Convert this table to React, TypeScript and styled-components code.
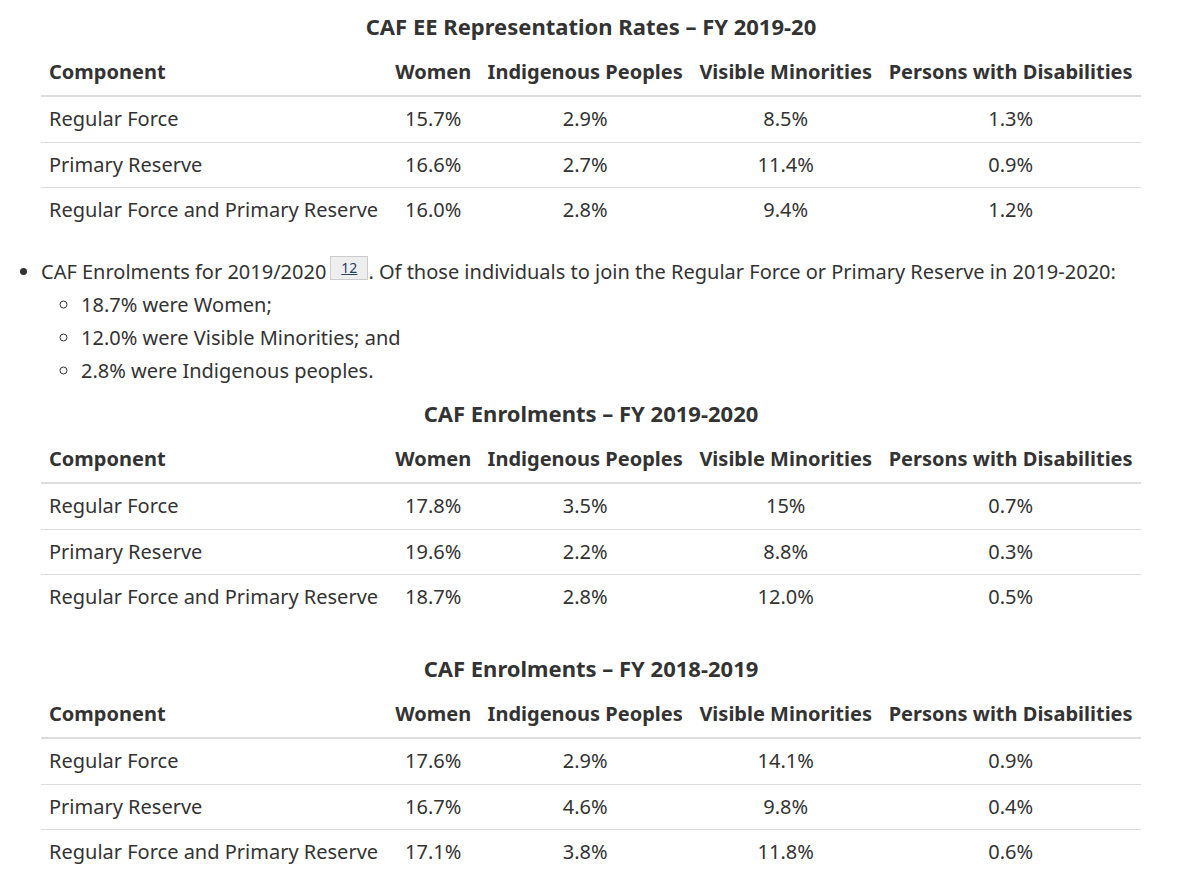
import styled, { createGlobalStyle } from "styled-components";

const GlobalStyle = createGlobalStyle`
    body {
        margin: 0;
        background: #ffffff;
        color: #333333;
        font-family: "Noto Sans", "Open Sans", sans-serif;
        font-size: 20px;
    }
`;

const Page = styled.main`
    padding-left: 1px;
    width: 1183px;
    box-sizing: border-box;
`;

const Table = styled.table`
    width: 1100px;
    margin: 0 0 22px 40px;
    border-collapse: collapse;
    font-size: 20px;
    line-height: 28.75px;
`;

const Caption = styled.caption`
    padding: 10px 0 8px;
    font-size: 22px;
    font-weight: 700;
    line-height: 32px;
    text-align: center;
    color: #333333;
`;

const Th = styled.th<{ $left?: boolean }>`
    padding: 8px;
    font-weight: 700;
    text-align: ${(p) => (p.$left ? "left" : "center")};
    border-bottom: 2px solid #dddddd;
    white-space: nowrap;
`;

const Td = styled.td<{ $left?: boolean }>`
    padding: 8px;
    text-align: ${(p) => (p.$left ? "left" : "center")};
    border-top: 1px solid #dddddd;
    white-space: nowrap;
`;

const List = styled.ul`
    margin: 0;
    padding-left: 40px;
    line-height: 33px;
`;

const SubList = styled.ul`
    margin: 0;
    padding-left: 40px;
    list-style-type: circle;
`;

const Item = styled.li`
    margin: 0;
`;

const FootnoteRef = styled.sup`
    display: inline-block;
    vertical-align: 6px;
    font-size: 14px;
    line-height: 22px;
    padding: 0 10px;
    margin: 0 0 0 4px;
    background: #eeeeee;
    border: 1px solid #cccccc;
`;

const FootnoteLink = styled.a`
    color: #284162;
    text-decoration: underline;
`;

type Row = [string, string, string, string, string];

type TableData = {
    title: string;
    rows: Row[];
};

const headers = ["Women", "Indigenous Peoples", "Visible Minorities", "Persons with Disabilities"];

function DataTable({ title, rows }: TableData) {
    return (
        <Table>
            <Caption>{title}</Caption>
            <thead>
                <tr>
                    <Th $left>Component</Th>
                    {headers.map((h) => (
                        <Th key={h}>{h}</Th>
                    ))}
                </tr>
            </thead>
            <tbody>
                {rows.map((r) => (
                    <tr key={r[0]}>
                        <Td $left>{r[0]}</Td>
                        <Td>{r[1]}</Td>
                        <Td>{r[2]}</Td>
                        <Td>{r[3]}</Td>
                        <Td>{r[4]}</Td>
                    </tr>
                ))}
            </tbody>
        </Table>
    );
}

const rates: TableData = {
    title: "CAF EE Representation Rates – FY 2019-20",
    rows: [
        ["Regular Force", "15.7%", "2.9%", "8.5%", "1.3%"],
        ["Primary Reserve", "16.6%", "2.7%", "11.4%", "0.9%"],
        ["Regular Force and Primary Reserve", "16.0%", "2.8%", "9.4%", "1.2%"],
    ],
};

const enrol2020: TableData = {
    title: "CAF Enrolments – FY 2019-2020",
    rows: [
        ["Regular Force", "17.8%", "3.5%", "15%", "0.7%"],
        ["Primary Reserve", "19.6%", "2.2%", "8.8%", "0.3%"],
        ["Regular Force and Primary Reserve", "18.7%", "2.8%", "12.0%", "0.5%"],
    ],
};

const enrol2019: TableData = {
    title: "CAF Enrolments – FY 2018-2019",
    rows: [
        ["Regular Force", "17.6%", "2.9%", "14.1%", "0.9%"],
        ["Primary Reserve", "16.7%", "4.6%", "9.8%", "0.4%"],
        ["Regular Force and Primary Reserve", "17.1%", "3.8%", "11.8%", "0.6%"],
    ],
};

export default function App() {
    return (
        <Page>
            <GlobalStyle />
            <DataTable {...rates} />
            <List>
                <Item>
                    CAF Enrolments for 2019/2020
                    <FootnoteRef>
                        <FootnoteLink href="#fn12">12</FootnoteLink>
                    </FootnoteRef>
                    . Of those individuals to join the Regular Force or Primary Reserve in 2019-2020:
                    <SubList>
                        <Item>18.7% were Women;</Item>
                        <Item>12.0% were Visible Minorities; and</Item>
                        <Item>2.8% were Indigenous peoples.</Item>
                    </SubList>
                </Item>
            </List>
            <DataTable {...enrol2020} />
            <DataTable {...enrol2019} />
        </Page>
    );
}
